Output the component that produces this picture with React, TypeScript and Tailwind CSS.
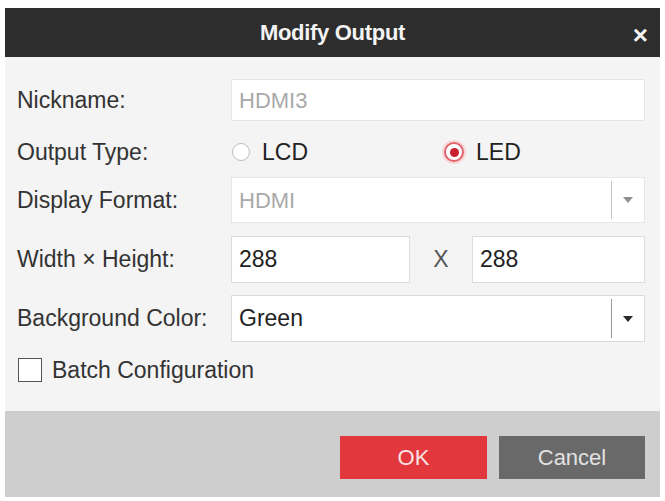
import React from 'react';

function Caret({ disabled }: { disabled?: boolean }) {
  return (
    <div className="flex h-full w-[33px] items-center">
      <div className={`h-[86%] w-px ${disabled ? 'bg-[#c4c4c4]' : 'bg-[#9a9a9a]'}`} />
      <svg width="10" height="6" viewBox="0 0 10 6" className="ml-[11px]">
        <path d="M0 0 L10 0 L5 6 Z" fill={disabled ? '#8f8f8f' : '#2a2a2a'} />
      </svg>
    </div>
  );
}

function Radio({ checked, label }: { checked?: boolean; label: string }) {
  return (
    <div className="flex items-center gap-[12px]">
      {checked ? (
        <div className="flex h-[20px] w-[20px] items-center justify-center rounded-full border-[2px] border-[#e0646a] bg-white shadow-[0_0_0_2px_#f7d6d8]">
          <div className="h-[9px] w-[9px] rounded-full bg-[#c8202e]" />
        </div>
      ) : (
        <div className="h-[18px] w-[18px] rounded-full border border-[#bdbdbd] bg-white" />
      )}
      <span className="text-[23px] text-[#222]">{label}</span>
    </div>
  );
}

export default function App() {
  return (
    <div className="h-[501px] w-[665px] bg-white pt-[8px] pl-[5px]" style={{ fontFamily: '"Liberation Sans", Arial, sans-serif' }}>
      <div className="flex w-[655px] flex-col">
        <div className="relative flex h-[49px] items-center justify-center bg-[#2d2d2d]">
          <span className="text-[22px] font-bold tracking-[-0.3px] text-[#f4f4f4]">Modify Output</span>
          <span className="absolute right-[12px] top-[8px] text-[26px] font-bold text-[#f4f4f4]">×</span>
        </div>

        <div className="flex h-[354px] flex-col bg-[#f4f4f4] pl-[12px] pr-[15px] pt-[22px]">
          <div className="flex h-[42px] items-center">
            <span className="w-[214px] text-[23px] text-[#333]">Nickname:</span>
            <div className="flex h-full flex-1 items-center border border-[#e6e6e6] bg-white pl-[7px] text-[22px] text-[#a9a9a9]">HDMI3</div>
          </div>

          <div className="mt-[16px] flex h-[30px] items-center">
            <span className="w-[214px] text-[23px] text-[#333]">Output Type:</span>
            <div className="w-[213px] pl-[1px]">
              <Radio label="LCD" />
            </div>
            <Radio checked label="LED" />
          </div>

          <div className="mt-[10px] flex h-[46px] items-center">
            <span className="w-[214px] text-[23px] text-[#333]">Display Format:</span>
            <div className="flex h-full flex-1 items-center border border-[#e6e6e6] bg-white pl-[7px] text-[22px] text-[#a9a9a9]">
              <span className="flex-1">HDMI</span>
              <Caret disabled />
            </div>
          </div>

          <div className="mt-[13px] flex h-[47px] items-center">
            <span className="w-[214px] text-[23px] text-[#333]">Width × Height:</span>
            <div className="flex h-full w-[179px] items-center border border-[#dcdcdc] bg-white pl-[7px] text-[23px] text-[#222]">288</div>
            <span className="flex w-[62px] justify-center text-[23px] text-[#555]">X</span>
            <div className="flex h-full flex-1 items-center border border-[#dcdcdc] bg-white pl-[7px] text-[23px] text-[#222]">288</div>
          </div>

          <div className="mt-[12px] flex h-[47px] items-center">
            <span className="w-[214px] text-[23px] text-[#333]">Background Color:</span>
            <div className="flex h-full flex-1 items-center border border-[#dcdcdc] bg-white pl-[7px] text-[23px] text-[#222]">
              <span className="flex-1">Green</span>
              <Caret />
            </div>
          </div>

          <div className="mt-[11px] flex items-center gap-[10px] pl-[1px]">
            <div className="h-[24px] w-[24px] border-[1.5px] border-[#555] bg-white" />
            <span className="text-[23px] text-[#333]">Batch Configuration</span>
          </div>
        </div>

        <div className="flex h-[86px] items-start justify-end gap-[12px] bg-[#cecece] pr-[15px] pt-[25px]">
          <button className="flex h-[43px] w-[147px] items-center justify-center bg-[#e2373d] text-[22px] text-[#fbe3e3]">OK</button>
          <button className="flex h-[43px] w-[146px] items-center justify-center bg-[#696969] text-[22px] text-[#e2e2e2]">Cancel</button>
        </div>
      </div>
    </div>
  );
}
